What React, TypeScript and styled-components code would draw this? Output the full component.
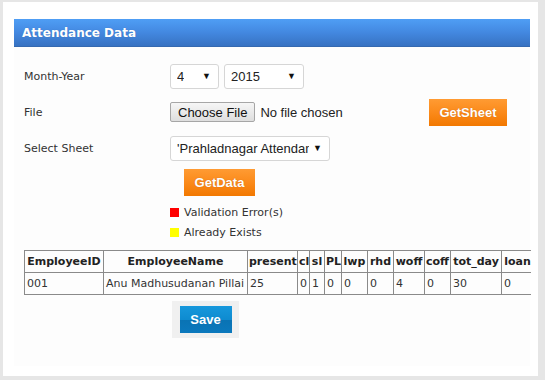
import styled, { createGlobalStyle } from "styled-components";

const GlobalStyle = createGlobalStyle`
  html, body {
    margin: 0;
    padding: 0;
    background: #e6e6e6;
  }
  body {
    font-family: "DejaVu Sans", Verdana, sans-serif;
  }
`;

const Page = styled.div`
  width: 545px;
  height: 380px;
  box-sizing: border-box;
  padding: 2px 7px 4px 3px;
  overflow: hidden;
`;

const Sheet = styled.div`
  height: 100%;
  background: #fff;
  padding: 17px 8px 0 11px;
  box-sizing: border-box;
`;

const Panel = styled.div`
  background: #fdfdfd;
  height: 347px;
`;

const Header = styled.div`
  height: 28px;
  display: flex;
  align-items: center;
  padding-left: 8px;
  background: linear-gradient(to bottom, #4f9ef5 0%, #4388e0 50%, #3772c2 100%);
  border-bottom: 1px solid #3569b0;
  box-sizing: border-box;
  color: #fff;
  font-weight: bold;
  font-size: 12px;
  text-shadow: 0 0 1px rgba(0, 0, 0, 0.2);
`;

const Body = styled.div`
  padding: 11px 0 0 10px;
`;

const Row = styled.div`
  display: grid;
  grid-template-columns: 146px 1fr;
  align-items: center;
  height: 36px;
`;

const Label = styled.div`
  font-size: 11px;
  color: #333;
`;

const Controls = styled.div`
  display: flex;
  align-items: center;
  gap: 5px;
  padding-right: 23px;
  font-family: "Liberation Sans", Arial, sans-serif;
`;

const SelectBox = styled.div<{ $w: number }>`
  width: ${({ $w }) => $w}px;
  height: 25px;
  box-sizing: border-box;
  border: 1px solid #d6d6d6;
  border-radius: 3px;
  background: #fff;
  display: flex;
  align-items: center;
  justify-content: space-between;
  padding: 0 7px 0 6px;
  font-size: 13px;
  color: #222;
  white-space: nowrap;
  span {
    overflow: hidden;
  }
  &::after {
    content: "▼";
    font-size: 9px;
    margin-left: 4px;
    color: #111;
  }
`;

const FileButton = styled.div`
  height: 20px;
  box-sizing: border-box;
  padding: 0 7px;
  display: flex;
  align-items: center;
  border: 1px solid #a6a6a6;
  border-radius: 2px;
  background: linear-gradient(to bottom, #f6f6f6, #dedede);
  font-size: 13px;
  color: #111;
`;

const FileText = styled.span`
  font-size: 13px;
  color: #222;
`;

const OrangeButton = styled.button<{ $w: number }>`
  width: ${({ $w }) => $w}px;
  height: 27px;
  border: none;
  padding: 0;
  background: linear-gradient(to bottom, #ff9b33 0%, #fb8a1a 50%, #f27800 100%);
  color: #fff;
  font-family: "Liberation Sans", Arial, sans-serif;
  font-weight: bold;
  font-size: 13px;
  text-shadow: 0 0 1px rgba(120, 50, 0, 0.4);
`;

const SheetButton = styled(OrangeButton)`
  margin-left: auto;
`;

const DataRow = styled.div`
  padding: 3px 0 0 160px;
`;

const Legend = styled.div`
  padding: 12px 0 0 146px;
  display: flex;
  flex-direction: column;
  gap: 11px;
`;

const LegendItem = styled.div<{ $color: string }>`
  display: flex;
  align-items: center;
  gap: 5px;
  font-size: 11px;
  color: #333;
  height: 9px;
  &::before {
    content: "";
    width: 9px;
    height: 9px;
    background: ${({ $color }) => $color};
  }
`;

const TableWrap = styled.div`
  margin-top: 13px;
  width: 507px;
  overflow: hidden;
`;

const Table = styled.table`
  border-collapse: collapse;
  table-layout: fixed;
  width: 509px;
  font-size: 11px;
  color: #333;
  white-space: nowrap;
  th,
  td {
    border: 1px solid #8a8a8a;
    height: 22px;
    padding: 0 1px;
    box-sizing: border-box;
    overflow: hidden;
  }
  th {
    font-weight: bold;
    color: #222;
    text-align: center;
  }
  td {
    text-align: left;
    padding-left: 2px;
  }
`;

const SaveWrap = styled.div`
  margin: 6px 0 0 148px;
  width: 67px;
  height: 37px;
  background: #f0f0f0;
  display: flex;
  align-items: center;
  justify-content: center;
`;

const SaveButton = styled.button`
  width: 52px;
  height: 27px;
  border: none;
  padding: 0;
  background: linear-gradient(to bottom, #1798dc 0%, #0e8bd0 50%, #0a73b4 52%, #0b79bd 100%);
  color: #fff;
  font-family: "Liberation Sans", Arial, sans-serif;
  font-weight: bold;
  font-size: 13px;
`;

const columns: [string, number][] = [
  ["EmployeeID", 79],
  ["EmployeeName", 144],
  ["present", 50],
  ["cl", 12],
  ["sl", 15],
  ["PL", 17],
  ["lwp", 26],
  ["rhd", 26],
  ["woff", 31],
  ["coff", 26],
  ["tot_day", 51],
  ["loan", 32],
];

const rows = [
  ["001", "Anu Madhusudanan Pillai", "25", "0", "1", "0", "0", "0", "4", "0", "30", "0"],
];

export default function App() {
  return (
    <Page>
      <GlobalStyle />
      <Sheet>
        <Panel>
          <Header>Attendance Data</Header>
          <Body>
            <Row>
              <Label>Month-Year</Label>
              <Controls>
                <SelectBox $w={49}>
                  <span>4</span>
                </SelectBox>
                <SelectBox $w={80}>
                  <span>2015</span>
                </SelectBox>
              </Controls>
            </Row>
            <Row>
              <Label>File</Label>
              <Controls>
                <FileButton>Choose File</FileButton>
                <FileText>No file chosen</FileText>
                <SheetButton $w={78}>GetSheet</SheetButton>
              </Controls>
            </Row>
            <Row>
              <Label>Select Sheet</Label>
              <Controls>
                <SelectBox $w={160}>
                  <span>'Prahladnagar Attendance</span>
                </SelectBox>
              </Controls>
            </Row>
            <DataRow>
              <OrangeButton $w={71}>GetData</OrangeButton>
            </DataRow>
            <Legend>
              <LegendItem $color="#ff0000">Validation Error(s)</LegendItem>
              <LegendItem $color="#ffff00">Already Exists</LegendItem>
            </Legend>
            <TableWrap>
              <Table>
                <colgroup>
                  {columns.map(([c, w]) => (
                    <col key={c} style={{ width: w }} />
                  ))}
                </colgroup>
                <thead>
                  <tr>
                    {columns.map(([c]) => (
                      <th key={c}>{c}</th>
                    ))}
                  </tr>
                </thead>
                <tbody>
                  {rows.map((r) => (
                    <tr key={r[0]}>
                      {r.map((v, i) => (
                        <td key={i}>{v}</td>
                      ))}
                    </tr>
                  ))}
                </tbody>
              </Table>
            </TableWrap>
            <SaveWrap>
              <SaveButton>Save</SaveButton>
            </SaveWrap>
          </Body>
        </Panel>
      </Sheet>
    </Page>
  );
}
